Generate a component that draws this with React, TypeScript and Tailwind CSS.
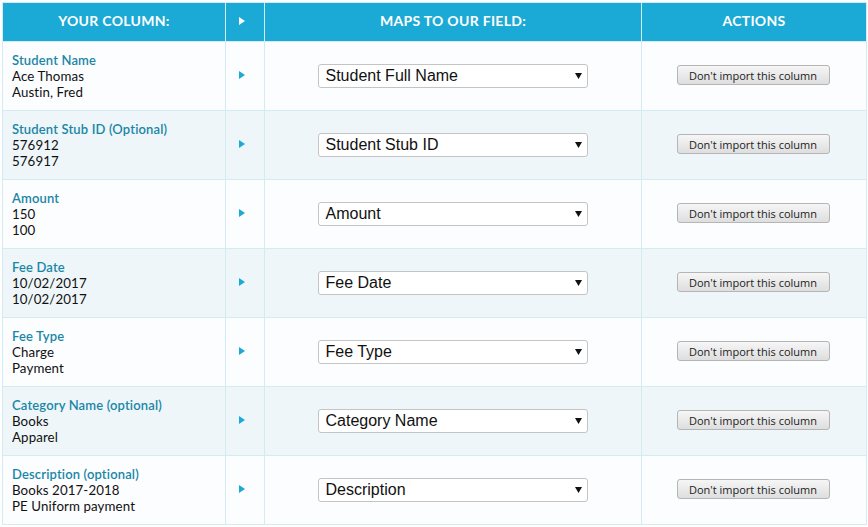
import React from 'react';

const rows = [
  { label: 'Student Name', values: ['Ace Thomas', 'Austin, Fred'], field: 'Student Full Name' },
  { label: 'Student Stub ID (Optional)', values: ['576912', '576917'], field: 'Student Stub ID' },
  { label: 'Amount', values: ['150', '100'], field: 'Amount' },
  { label: 'Fee Date', values: ['10/02/2017', '10/02/2017'], field: 'Fee Date' },
  { label: 'Fee Type', values: ['Charge', 'Payment'], field: 'Fee Type' },
  { label: 'Category Name (optional)', values: ['Books', 'Apparel'], field: 'Category Name' },
  { label: 'Description (optional)', values: ['Books 2017-2018', 'PE Uniform payment'], field: 'Description' },
];

function Arrow({ white }: { white?: boolean }) {
  return (
    <svg width="6" height="8" viewBox="0 0 6 8" className="block">
      <path d="M0 0 L6 4 L0 8 Z" fill={white ? '#ffffff' : '#1ba9d5'} />
    </svg>
  );
}

export default function App() {
  return (
    <div className="w-[868px] h-[527px] bg-white pl-[2px] pt-[2px]" style={{ fontFamily: 'Lato, "Open Sans", sans-serif' }}>
      <table className="w-[864px] border-collapse table-fixed">
        <colgroup>
          <col className="w-[223px]" />
          <col className="w-[39px]" />
          <col className="w-[377px]" />
          <col className="w-[225px]" />
        </colgroup>
        <thead>
          <tr className="h-[39px] bg-[#1ba9d5] text-white text-[14px] font-bold uppercase">
            <th className="border border-[#d3ebf2] font-bold tracking-[0.3px] pb-[3px]">Your Column:</th>
            <th className="border border-[#d3ebf2] pb-[2px]">
              <div className="flex pl-[13px]"><Arrow white /></div>
            </th>
            <th className="border border-[#d3ebf2] font-bold tracking-[0.3px] pb-[3px]">Maps to our field:</th>
            <th className="border border-[#d3ebf2] font-bold tracking-[0.3px] pb-[3px]">Actions</th>
          </tr>
        </thead>
        <tbody>
          {rows.map((r, i) => (
            <tr key={r.label} className={`h-[69px] ${i % 2 === 1 ? 'bg-[#eef6f9]' : 'bg-[#fcfdff]'}`}>
              <td className="border border-[#d3ebf2] pl-[9px] align-middle">
                <div className="text-[13px] leading-[16px] font-semibold text-[#1a86a6] tracking-[0.15px]">{r.label}</div>
                {r.values.map((v, j) => (
                  <div key={j} className="text-[13.3px] leading-[16px] text-[#111] tracking-[0.1px]">{v}</div>
                ))}
              </td>
              <td className="border border-[#d3ebf2] align-middle">
                <div className="flex pl-[13px] pb-[2px]"><Arrow /></div>
              </td>
              <td className="border border-[#d3ebf2] align-middle">
                <div className="flex justify-center pr-[1px]">
                  <div
                    className="w-[270px] h-[24px] bg-white border border-[#c4c4c4] rounded-[3px] flex items-center justify-between pl-[7px] pr-[5px] text-[16px] text-[#111]"
                    style={{ fontFamily: '"Liberation Sans", Arial, sans-serif' }}
                  >
                    <span>{r.field}</span>
                    <svg width="7" height="6" viewBox="0 0 7 6"><path d="M0 0 L7 0 L3.5 6 Z" fill="#111" /></svg>
                  </div>
                </div>
              </td>
              <td className="border border-[#d3ebf2] align-middle">
                <div className="flex justify-center pb-[2px] pr-[2px]">
                  <button
                    className="w-[153px] h-[20px] rounded-[3px] border border-[#b5b5b5] bg-gradient-to-b from-[#f6f6f6] to-[#dedede] text-[11px] text-[#222] leading-none"
                    style={{ fontFamily: '"Open Sans", "Liberation Sans", sans-serif' }}
                  >
                    Don't import this column
                  </button>
                </div>
              </td>
            </tr>
          ))}
        </tbody>
      </table>
    </div>
  );
}
